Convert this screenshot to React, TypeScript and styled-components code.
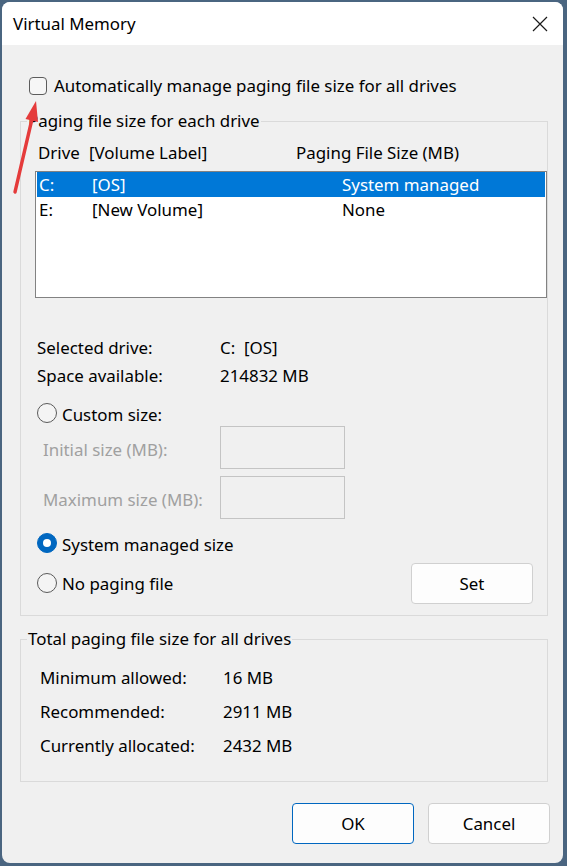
import React from "react";
import styled, { createGlobalStyle } from "styled-components";

const GlobalStyle = createGlobalStyle`
  html, body {
    margin: 0;
    padding: 0;
    background: #4a6580;
    font-family: "Noto Sans", "Open Sans", sans-serif;
    font-size: 16.9px;
    color: #000;
  }
  #root {
    width: 567px;
    height: 866px;
    overflow: hidden;
  }
`;

const Window = styled.div`
  position: relative;
  margin: 2px 0 0 2px;
  width: 561px;
  height: 861px;
  border-radius: 8px;
  background: #f0f0f0;
  overflow: hidden;
  display: flex;
  flex-direction: column;
`;

const TitleBar = styled.div`
  height: 43px;
  background: #ffffff;
  display: flex;
  align-items: center;
  justify-content: space-between;
  padding: 0 15px 0 11px;
  flex-shrink: 0;
`;

const Title = styled.span`
  line-height: 20px;
`;

const Body = styled.div`
  display: flex;
  flex-direction: column;
  padding: 0 15px 0 18px;
`;

const CheckRow = styled.label`
  display: flex;
  align-items: center;
  gap: 7px;
  margin: 32px 0 0 9px;
  height: 18px;
  line-height: 20px;
`;

const CheckBox = styled.span`
  width: 18px;
  height: 18px;
  flex-shrink: 0;
  box-sizing: border-box;
  border: 1px solid #5c5c5c;
  border-radius: 4px;
  background: #f6f6f6;
`;

const Group = styled.fieldset<{ $top: number }>`
  margin: ${(p) => p.$top}px 0 0 0;
  padding: 0;
  border: 1px solid #dadada;
  min-width: 0;
`;

const Legend = styled.legend`
  margin-left: 6px;
  padding: 0 1px;
  line-height: 20px;
`;

const GroupInner = styled.div<{ $pad: string }>`
  padding: ${(p) => p.$pad};
  display: flex;
  flex-direction: column;
`;

const HeaderRow = styled.div`
  display: grid;
  grid-template-columns: 51px 207px 1fr;
  padding-left: 3px;
  line-height: 20px;
  margin-top: 12px;
`;

const ListBox = styled.div`
  margin-top: 8px;
  height: 127px;
  box-sizing: border-box;
  border: 1px solid #828282;
  background: #ffffff;
  padding: 0 1px;
`;

const ListRow = styled.div<{ $selected?: boolean }>`
  display: grid;
  grid-template-columns: 53px 250px 1fr;
  align-items: center;
  height: 25px;
  padding-left: 2px;
  background: ${(p) => (p.$selected ? "#0078d7" : "transparent")};
  color: ${(p) => (p.$selected ? "#ffffff" : "#000000")};
`;

const InfoRow = styled.div<{ $h: number; $label: number; $pad: number }>`
  display: grid;
  grid-template-columns: ${(p) => p.$label}px 1fr;
  align-items: center;
  height: ${(p) => p.$h}px;
  padding-left: ${(p) => p.$pad}px;
`;

const Spacer = styled.div<{ $h: number }>`
  height: ${(p) => p.$h}px;
`;

const RadioRow = styled.label<{ $top?: number }>`
  display: flex;
  align-items: center;
  gap: 5px;
  height: 28px;
  margin-top: ${(p) => p.$top ?? 0}px;
  padding-left: 2px;
`;

const Radio = styled.span<{ $checked?: boolean }>`
  position: relative;
  width: 20px;
  height: 20px;
  flex-shrink: 0;
  box-sizing: border-box;
  border-radius: 50%;
  border: 1px solid ${(p) => (p.$checked ? "#0067c0" : "#5a5a5a")};
  background: ${(p) => (p.$checked ? "#0067c0" : "#f4f4f4")};
  margin-top: -2px;
  &::after {
    content: "";
    display: ${(p) => (p.$checked ? "block" : "none")};
    position: absolute;
    left: 5px;
    top: 5px;
    width: 8px;
    height: 8px;
    border-radius: 50%;
    background: #ffffff;
  }
`;

const SizeRow = styled.div<{ $top: number }>`
  display: grid;
  grid-template-columns: 177px 125px;
  align-items: center;
  padding-left: 8px;
  margin-top: ${(p) => p.$top}px;
`;

const DisabledLabel = styled.span`
  color: #a0a0a0;
  margin-top: 4px;
`;

const SizeInput = styled.div`
  height: 43px;
  box-sizing: border-box;
  border: 1px solid #c4c4c4;
  background: #f0f0f0;
`;

const BottomRow = styled.div`
  display: flex;
  align-items: center;
  justify-content: space-between;
  padding-right: 14px;
  margin-top: 5px;
`;

const Button = styled.button<{ $primary?: boolean }>`
  width: 122px;
  height: 41px;
  box-sizing: border-box;
  border-radius: 4px;
  border: 1px solid ${(p) => (p.$primary ? "#0067c0" : "#d0d0d0")};
  background: #fdfdfd;
  font-family: inherit;
  font-size: 16.9px;
  color: #000;
  padding: 0;
`;

const ButtonBar = styled.div`
  display: flex;
  justify-content: flex-end;
  gap: 14px;
  margin: 21px -2px 0 0;
`;

const Arrow = styled.svg`
  position: absolute;
  left: 3px;
  top: 93px;
  width: 40px;
  height: 105px;
  pointer-events: none;
`;

const CloseIcon = () => (
  <svg width="16" height="16" viewBox="0 0 16 16">
    <path d="M1 1 L15 15 M15 1 L1 15" stroke="#1a1a1a" strokeWidth="1.2" />
  </svg>
);

export default function App() {
  return (
    <>
      <GlobalStyle />
      <Window>
        <TitleBar>
          <Title>Virtual Memory</Title>
          <CloseIcon />
        </TitleBar>
        <Body>
          <CheckRow>
            <CheckBox />
            Automatically manage paging file size for all drives
          </CheckRow>

          <Group $top={16}>
            <Legend>Paging file size for each drive</Legend>
            <GroupInner $pad="0 0 11px 14px">
              <HeaderRow>
                <span>Drive</span>
                <span>[Volume Label]</span>
                <span>Paging File Size (MB)</span>
              </HeaderRow>
              <ListBox>
                <ListRow $selected>
                  <span>C:</span>
                  <span>[OS]</span>
                  <span>System managed</span>
                </ListRow>
                <ListRow>
                  <span>E:</span>
                  <span>[New Volume]</span>
                  <span>None</span>
                </ListRow>
              </ListBox>

              <Spacer $h={35} />
              <InfoRow $h={28} $label={183} $pad={2}>
                <span>Selected drive:</span>
                <span>C:&nbsp; [OS]</span>
              </InfoRow>
              <InfoRow $h={28} $label={183} $pad={2}>
                <span>Space available:</span>
                <span>214832 MB</span>
              </InfoRow>

              <RadioRow $top={11}>
                <Radio />
                Custom size:
              </RadioRow>
              <SizeRow $top={-2}>
                <DisabledLabel>Initial size (MB):</DisabledLabel>
                <SizeInput />
              </SizeRow>
              <SizeRow $top={7}>
                <DisabledLabel>Maximum size (MB):</DisabledLabel>
                <SizeInput />
              </SizeRow>

              <RadioRow $top={11}>
                <Radio $checked />
                System managed size
              </RadioRow>
              <BottomRow>
                <RadioRow>
                  <Radio />
                  No paging file
                </RadioRow>
                <Button>Set</Button>
              </BottomRow>
            </GroupInner>
          </Group>

          <Group $top={13}>
            <Legend>Total paging file size for all drives</Legend>
            <GroupInner $pad="11px 0 19px 19px">
              <InfoRow $h={34} $label={183} $pad={0}>
                <span>Minimum allowed:</span>
                <span>16 MB</span>
              </InfoRow>
              <InfoRow $h={34} $label={183} $pad={0}>
                <span>Recommended:</span>
                <span>2911 MB</span>
              </InfoRow>
              <InfoRow $h={34} $label={183} $pad={0}>
                <span>Currently allocated:</span>
                <span>2432 MB</span>
              </InfoRow>
            </GroupInner>
          </Group>

          <ButtonBar>
            <Button $primary>OK</Button>
            <Button>Cancel</Button>
          </ButtonBar>
        </Body>

        <Arrow viewBox="0 0 40 105">
          <line x1="10" y1="97" x2="27" y2="24" stroke="#e53b3b" strokeWidth="3.4" strokeLinecap="round" />
          <polygon points="31,6 33,27 20.5,24" fill="#e53b3b" />
        </Arrow>
      </Window>
    </>
  );
}
